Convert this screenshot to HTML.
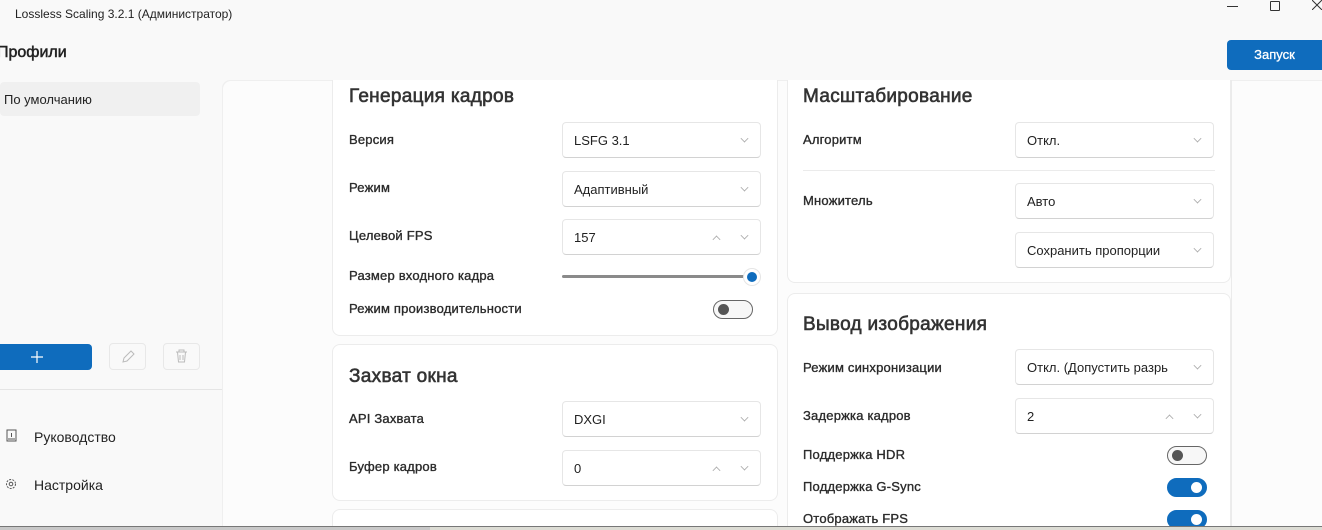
<!DOCTYPE html>
<html><head><meta charset="utf-8"><style>
*{margin:0;padding:0;box-sizing:border-box}
html,body{width:1322px;height:530px;overflow:hidden}
body{background:#f9f9f9;font-family:"Liberation Sans","DejaVu Sans",sans-serif;color:#1f1f1f;position:relative}
.a{position:absolute}
.t{font-size:12px;color:#222}
.lbl{position:absolute;font-size:13px;color:#2b2b2b;-webkit-text-stroke:0.35px #2b2b2b;letter-spacing:0.2px}
.h{position:absolute;font-size:19px;color:#333;-webkit-text-stroke:0.6px #333;letter-spacing:0.3px}
.card{position:absolute;background:#fff;border:1px solid #ececec;border-radius:8px}
.dd{position:absolute;width:199px;height:36px;background:#fff;border:1px solid #e6e6e6;border-bottom-color:#d2d2d2;border-radius:4px;font-size:13px;color:#222;padding:10px 0 0 11px;white-space:nowrap;overflow:hidden}
.chev{position:absolute;right:12px;top:12px;width:7px;height:7px;border-right:1px solid #aaa;border-bottom:1px solid #aaa;transform:rotate(45deg) scale(.8)}
.up{position:absolute;right:40px;top:16px;width:7px;height:7px;border-left:1px solid #aaa;border-top:1px solid #aaa;transform:rotate(45deg) scale(.8)}
.tg{position:absolute;width:40px;height:19px;border-radius:10px;border:1px solid #666;background:#f7f7f7}
.tg::after{content:"";position:absolute;left:4px;top:3px;width:11px;height:11px;border-radius:50%;background:#555}
.tg.on{background:#0f6cbd;border-color:#0f6cbd}
.tg.on::after{left:auto;right:4px;background:#fff}
.nav{position:absolute;font-size:14px;color:#222}
#main{position:absolute;left:222px;top:80px;width:1100px;height:446px;overflow:hidden;background:#fcfcfc;border-top-left-radius:8px;box-shadow:inset 1px 1px 0 #efefef}
</style></head><body>
<div class="a t" style="left:15px;top:7px">Lossless Scaling 3.2.1 (Администратор)</div>
<div class="a" style="left:1227px;top:6px;width:11px;height:1px;background:#333"></div>
<div class="a" style="left:1270px;top:1px;width:10px;height:10px;border:1px solid #333;border-radius:1px"></div>
<svg class="a" style="left:1312px;top:0" width="10" height="10"><path d="M0 0 L10 10 M10 0 L0 10" stroke="#333" stroke-width="1"/></svg>
<div class="a" style="left:-3px;top:44px;font-size:16px;color:#222;-webkit-text-stroke:0.5px #222">Профили</div>
<div class="a" style="left:0;top:82px;width:200px;height:34px;background:#f0f0f0;border-radius:4px"></div>
<div class="a" style="left:4px;top:92px;font-size:13px;color:#222">По умолчанию</div>
<div class="a" style="left:1227px;top:40px;width:95px;height:30px;background:#0f6cbd;border-radius:4px 0 0 4px;color:#fff;font-size:13px;text-align:center;line-height:30px;-webkit-text-stroke:0.3px #fff">Запуск</div>

<div class="a" style="left:0;top:344px;width:92px;height:26px;background:#0f6cbd;border-radius:0 4px 4px 0"></div>
<svg class="a" style="left:31px;top:351px" width="12" height="12"><path d="M6 0 V12 M0 6 H12" stroke="#fff" stroke-width="1.2"/></svg>
<div class="a" style="left:109px;top:343px;width:37px;height:27px;border:1px solid #e8e8e8;border-radius:4px">
<svg width="37" height="27" style="position:absolute;left:-1px;top:-1px"><path d="M14 19 L15 15 L22 8 L25 11 L18 18 Z" fill="none" stroke="#bbb" stroke-width="1"/></svg></div>
<div class="a" style="left:163px;top:343px;width:37px;height:27px;border:1px solid #e8e8e8;border-radius:4px">
<svg width="37" height="27" style="position:absolute;left:-1px;top:-1px"><path d="M13 9 H24 M16 9 V7 H21 V9 M14.5 9 L15.5 19 H21.5 L22.5 9 M17 12 V17 M20 12 V17" fill="none" stroke="#bbb" stroke-width="1"/></svg></div>
<div class="a" style="left:0;top:389px;width:222px;height:1px;background:#e5e5e5"></div>
<svg class="a" style="left:5px;top:429px" width="14" height="14"><rect x="2" y="1" width="9" height="11" fill="none" stroke="#555"/><path d="M6.5 4 V8 M3 10 H10" stroke="#555"/></svg>
<div class="nav" style="left:34px;top:429px">Руководство</div>
<svg class="a" style="left:4px;top:477px" width="14" height="14"><circle cx="7" cy="7" r="4.5" fill="none" stroke="#555" stroke-dasharray="2 1.2"/><circle cx="7" cy="7" r="1.8" fill="none" stroke="#555"/></svg>
<div class="nav" style="left:34px;top:477px">Настройка</div>

<div id="main">
<div style="position:absolute;left:-222px;top:-80px;width:1322px;height:526px;overflow:hidden">
<div class="a" style="left:1231px;top:80px;width:1px;height:450px;background:#ebebeb"></div>

<div class="card" style="left:332px;top:60px;width:446px;height:276px"></div>
<div class="h" style="left:349px;top:86px">Генерация кадров</div>
<div class="lbl" style="left:349px;top:132px">Версия</div>
<div class="dd" style="left:562px;top:122px">LSFG 3.1<span class="chev"></span></div>
<div class="lbl" style="left:349px;top:180px">Режим</div>
<div class="dd" style="left:562px;top:171px">Адаптивный<span class="chev"></span></div>
<div class="lbl" style="left:349px;top:228px">Целевой FPS</div>
<div class="dd" style="left:562px;top:219px">157<span class="up"></span><span class="chev"></span></div>
<div class="lbl" style="left:349px;top:268px">Размер входного кадра</div>
<div class="a" style="left:562px;top:275px;width:190px;height:3px;background:#8a8a8a;border-radius:2px"></div>
<div class="a" style="left:743px;top:268px;width:18px;height:18px;border-radius:50%;background:#fff;border:1px solid #e5e5e5"></div>
<div class="a" style="left:747px;top:272px;width:10px;height:10px;border-radius:50%;background:#0f6cbd"></div>
<div class="lbl" style="left:349px;top:301px">Режим производительности</div>
<div class="tg" style="left:713px;top:300px"></div>

<div class="card" style="left:332px;top:344px;width:446px;height:157px"></div>
<div class="h" style="left:349px;top:366px">Захват окна</div>
<div class="lbl" style="left:349px;top:411px">API Захвата</div>
<div class="dd" style="left:562px;top:401px">DXGI<span class="chev"></span></div>
<div class="lbl" style="left:349px;top:459px">Буфер кадров</div>
<div class="dd" style="left:562px;top:450px">0<span class="up"></span><span class="chev"></span></div>
<div class="card" style="left:332px;top:509px;width:446px;height:60px"></div>

<div class="card" style="left:787px;top:60px;width:444px;height:223px"></div>
<div class="h" style="left:803px;top:86px">Масштабирование</div>
<div class="lbl" style="left:803px;top:132px">Алгоритм</div>
<div class="dd" style="left:1015px;top:122px">Откл.<span class="chev"></span></div>
<div class="a" style="left:803px;top:170px;width:412px;height:1px;background:#ebebeb"></div>
<div class="lbl" style="left:803px;top:193px">Множитель</div>
<div class="dd" style="left:1015px;top:183px">Авто<span class="chev"></span></div>
<div class="dd" style="left:1015px;top:232px">Сохранить пропорции<span class="chev"></span></div>

<div class="card" style="left:787px;top:293px;width:444px;height:260px"></div>
<div class="h" style="left:803px;top:314px">Вывод изображения</div>
<div class="lbl" style="left:803px;top:360px">Режим синхронизации</div>
<div class="dd" style="left:1015px;top:349px">Откл. (Допустить разрь<span class="chev"></span></div>
<div class="lbl" style="left:803px;top:408px">Задержка кадров</div>
<div class="dd" style="left:1015px;top:398px">2<span class="up"></span><span class="chev"></span></div>
<div class="lbl" style="left:803px;top:447px">Поддержка HDR</div>
<div class="tg" style="left:1167px;top:446px"></div>
<div class="lbl" style="left:803px;top:479px">Поддержка G-Sync</div>
<div class="tg on" style="left:1167px;top:478px"></div>
<div class="lbl" style="left:803px;top:511px">Отображать FPS</div>
<div class="tg on" style="left:1167px;top:510px"></div>
</div>
</div>

<div class="a" style="left:0;top:526px;width:1322px;height:1px;background:#777"></div>
<div class="a" style="left:0;top:527px;width:430px;height:3px;background:#c8c8c8"></div>
<div class="a" style="left:430px;top:527px;width:892px;height:3px;background:#dcdcd4"></div>
</body></html>
